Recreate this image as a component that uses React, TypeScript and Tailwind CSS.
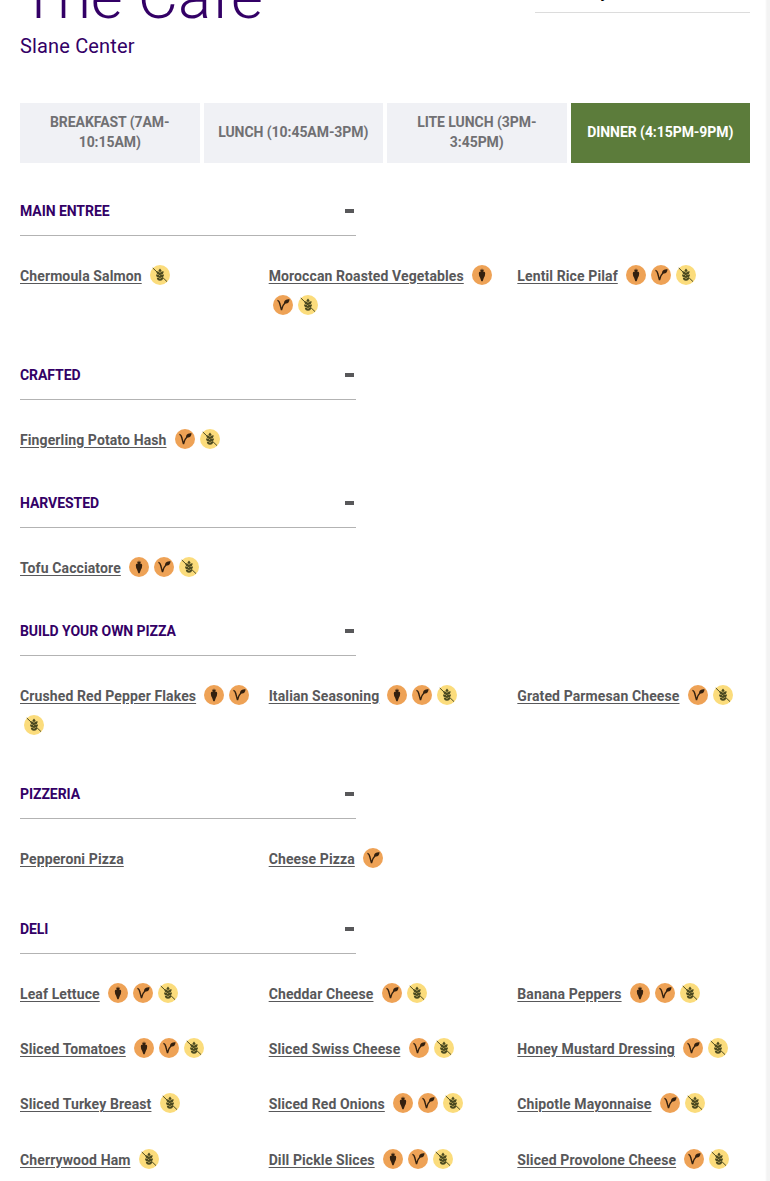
type Diet = "vegan" | "vegetarian" | "gluten";

type Item = { name: string; diets: Diet[] };

const V: Diet[] = ["vegan", "vegetarian", "gluten"];
const VG: Diet[] = ["vegetarian", "gluten"];
const G: Diet[] = ["gluten"];

const tabs = [
  "Breakfast (7am-10:15am)",
  "Lunch (10:45am-3pm)",
  "Lite Lunch (3pm-3:45pm)",
  "Dinner (4:15pm-9pm)",
];

const stations: { title: string; height: string; items: Item[] }[] = [
  {
    title: "Main Entree",
    height: "h-[164px]",
    items: [
      { name: "Chermoula Salmon", diets: G },
      { name: "Moroccan Roasted Vegetables", diets: V },
      { name: "Lentil Rice Pilaf", diets: V },
    ],
  },
  {
    title: "Crafted",
    height: "h-32",
    items: [{ name: "Fingerling Potato Hash", diets: VG }],
  },
  {
    title: "Harvested",
    height: "h-32",
    items: [{ name: "Tofu Cacciatore", diets: V }],
  },
  {
    title: "Build Your Own Pizza",
    height: "h-[163px]",
    items: [
      { name: "Crushed Red Pepper Flakes", diets: V },
      { name: "Italian Seasoning", diets: V },
      { name: "Grated Parmesan Cheese", diets: VG },
    ],
  },
  {
    title: "Pizzeria",
    height: "h-[135px]",
    items: [
      { name: "Pepperoni Pizza", diets: [] },
      { name: "Cheese Pizza", diets: ["vegetarian"] },
    ],
  },
  {
    title: "Deli",
    height: "h-[276px]",
    items: [
      { name: "Leaf Lettuce", diets: V },
      { name: "Cheddar Cheese", diets: VG },
      { name: "Banana Peppers", diets: V },
      { name: "Sliced Tomatoes", diets: V },
      { name: "Sliced Swiss Cheese", diets: VG },
      { name: "Honey Mustard Dressing", diets: VG },
      { name: "Sliced Turkey Breast", diets: G },
      { name: "Sliced Red Onions", diets: V },
      { name: "Chipotle Mayonnaise", diets: VG },
      { name: "Cherrywood Ham", diets: G },
      { name: "Dill Pickle Slices", diets: V },
      { name: "Sliced Provolone Cheese", diets: VG },
    ],
  },
];

const DietIcon = ({ diet }: { diet: Diet }) => (
  <svg
    viewBox="0 0 20 20"
    className="mr-px ml-1 inline-block size-5 align-[-4px]"
    aria-hidden
  >
    <circle cx="10" cy="10" r="10" fill={diet === "gluten" ? "#fbdc7c" : "#eea256"} />
    {diet === "vegan" && (
      <g fill="#33200f">
        <path d="M6.8 8.2Q6.8 6.4 8.4 6.4h3.2q1.6 0 1.6 1.8 0 2.3-1.2 4.4L10.6 16.2H9.4L8 12.6Q6.8 10.5 6.8 8.2Z" />
        <path d="M9.2 7 7.8 4.6l1.5.4L10 3.2l.7 1.8 1.5-.4L10.8 7Z" />
      </g>
    )}
    {diet === "vegetarian" && (
      <g fill="#33200f">
        <path
          d="M4.4 5.4c1.7.3 2 1.6 2.4 3.4L8.5 15c.6-3.2 1.9-6 4.6-8.6"
          fill="none"
          stroke="#33200f"
          strokeWidth="1.4"
        />
        <path d="M11.2 8.2c-.4-2.6 1.7-3.9 5.4-4-.3 3.4-2.2 5.2-5.4 4Z" />
      </g>
    )}
    {diet === "gluten" && (
      <>
        <g fill="#4c4a20">
          <path d="M10 3.6 11.6 5.5 10 7.5 8.4 5.5Z" />
          <path d="M6.4 6.3q2.9-.2 3.6 1.6.7-1.8 3.6-1.6.2 3.5-3.6 3.6-3.8-.1-3.6-3.6Z" />
          <path d="M6 9.6q3.2-.1 4 1.4.8-1.5 4-1.4 0 3.2-4 3.3-4-.1-4-3.3Z" />
          <path d="M6.8 12.8q2.5 0 3.2 1 .7-1 3.2-1-.2 2.9-3.2 3-3-.1-3.2-3Z" />
        </g>
        <path d="M2.8 3 17 16.6" stroke="#4c4a20" strokeWidth="1" />
      </>
    )}
  </svg>
);

const MenuItem = ({ name, diets }: Item) => (
  <li className="text-sm leading-[30.35px] font-bold tracking-[0.11px] text-[#58585a]">
    <a href="#" className="mr-[0.6px] underline underline-offset-2">
      {name}
    </a>{" "}
    {diets.map((diet) => (
      <DietIcon key={diet} diet={diet} />
    ))}
  </li>
);

export default function App() {
  return (
    <div className="flex h-[1181px] overflow-hidden bg-white font-['Roboto',sans-serif]">
      <main className="w-[765px] shrink-0 pr-[15px] pl-5">
        <header className="flex h-[103px] justify-between">
          <div className="text-[#330066]">
            <h1 className="-mt-[37px] h-[70px] text-[61.8px] leading-[69px] font-light">
              The Cafe
            </h1>
            <p className="text-xl leading-[26px] tracking-[0.15px]">Slane Center</p>
          </div>
          <div className="-mt-6 h-[37px] w-[215px] border-b border-[#dcdcdc] pl-1.5 text-base leading-[34px] font-bold text-black">
            Thursday
          </div>
        </header>

        <nav className="grid h-[60px] grid-cols-4 gap-1">
          {tabs.map((tab, i) => (
            <button
              key={tab}
              className={`px-3 pb-0.5 text-sm leading-5 font-bold tracking-[-0.06px] uppercase ${
                i === 3 ? "bg-[#5c7c3b] text-white" : "bg-[#f0f1f5] text-[#707073]"
              }`}
            >
              {tab}
            </button>
          ))}
        </nav>

        <div className="pt-6">
          {stations.map((station) => (
            <section key={station.title} className={station.height}>
              <h2 className="flex h-[49px] w-[336px] items-center justify-between border-b border-[#b3b3b3] text-sm font-bold tracking-[-0.06px] text-[#330066] uppercase">
                {station.title}
                <span className="mr-0.5 h-1 w-[9px] bg-[#58585a]" />
              </h2>
              <ul className="mt-[24.5px] -mr-px grid grid-cols-3 gap-x-[15px] gap-y-[25px]">
                {station.items.map((item) => (
                  <MenuItem key={item.name} {...item} />
                ))}
              </ul>
            </section>
          ))}
        </div>
      </main>
      <div className="flex-1 bg-linear-to-r from-white to-[#f3f3f3] to-40%" />
    </div>
  );
}
